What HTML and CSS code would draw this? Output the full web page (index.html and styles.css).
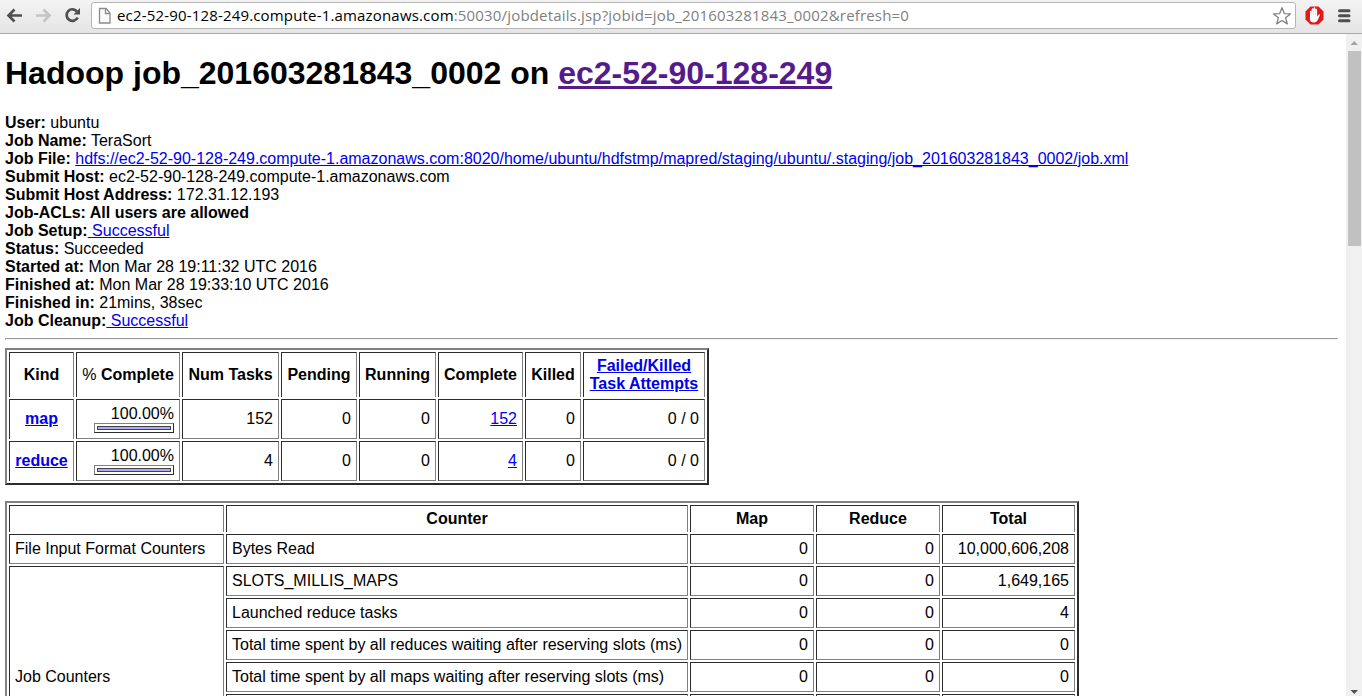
FILE: index.html
```html
<!DOCTYPE html>
<html lang="en">
<head>
<meta charset="utf-8">
<title>Hadoop job_201603281843_0002 on ec2-52-90-128-249</title>
<link rel="stylesheet" href="styles.css">
</head>
<body>
<header class="toolbar">
  <svg class="nav" width="86" height="33" viewBox="0 0 86 33">
    <g fill="none" stroke-width="2.700">
      <path d="M22 15.500H9M14.500 9.500l-6 6 6 6" stroke="#505050"/>
      <path d="M36 15.500h13M43.500 9.500l6 6-6 6" stroke="#c4c4c4"/>
      <path d="M77 11.500A5.800 5.800 0 1 0 77.700 17.500" stroke="#505050"/>
    </g>
    <path d="M80 8v6.500h-6.500z" fill="#505050"/>
  </svg>
  <div class="address">
    <svg width="14" height="18" viewBox="0 0 14 18"><path d="M1.500 1.500h6.500l4 4.500v10h-10.500zM7.500 1.500v5h4.500" fill="#fafafa" stroke="#8b8b8b" stroke-width="1.300"/></svg>
    <span class="url"><span class="host">ec2-52-90-128-249.compute-1.amazonaws.com</span><span class="path">:50030/jobdetails.jsp?jobid=job_201603281843_0002&amp;refresh=0</span></span>
    <svg class="star" width="20" height="20" viewBox="0 0 20 20"><path d="M10 1.700l2.300 5.900 6.100.3-4.800 3.900 1.700 6.100L10 14.500l-5.300 3.400 1.700-6.100L1.600 7.900l6.100-.3z" fill="none" stroke="#808080" stroke-width="1.300" stroke-linejoin="round"/></svg>
  </div>
  <svg class="tools" width="66" height="33" viewBox="0 0 66 33">
    <path d="M14.500 6.500h8l5 5v8l-5 5h-8l-5-5v-8z" fill="#e0191c"/>
    <path d="M14 14.500v-3.200q.9-1.400 1.700 0V9q.9-1.400 1.800 0V7.900q1-1.400 1.900 0v1.500q.9-1.300 1.700 0v7l1.600-2q1.400-.5 1.400.6l-2.800 5.700q-1.300 2-3.500 1.700-3.600 0-3.900-3z" fill="#fff"/>
    <path d="M15.700 11v4M17.500 9v6M19.400 9v6" stroke="#edb7b7" stroke-width=".4"/>
    <path d="M43.500 10.700h9.500M43.500 15.700h9.500M43.500 20.700h9.500" stroke="#4f4f4f" stroke-width="3" stroke-linecap="round"/>
  </svg>
</header>
<div class="view">
  <main class="page">
    <h1><span class="h1-text">Hadoop job_201603281843_0002 on </span><a class="visited" href="#">ec2-52-90-128-249</a></h1>
    <div class="info">
      <div><b>User:</b> ubuntu</div>
      <div><b>Job Name:</b> TeraSort</div>
      <div><b>Job File:</b> <a class="file" href="#">hdfs://ec2-52-90-128-249.compute-1.amazonaws.com:8020/home/ubuntu/hdfstmp/mapred/staging/ubuntu/.staging/job_201603281843_0002/job.xml</a></div>
      <div><b>Submit Host:</b> ec2-52-90-128-249.compute-1.amazonaws.com</div>
      <div><b>Submit Host Address:</b> 172.31.12.193</div>
      <div><b>Job-ACLs: All users are allowed</b></div>
      <div><b>Job Setup:</b><a href="#"> Successful</a></div>
      <div><b>Status:</b> Succeeded</div>
      <div><b>Started at:</b> Mon Mar 28 19:11:32 UTC 2016</div>
      <div><b>Finished at:</b> Mon Mar 28 19:33:10 UTC 2016</div>
      <div><b>Finished in:</b> 21mins, 38sec</div>
      <div><b>Job Cleanup:</b><a href="#"> Successful</a></div>
    </div>
    <hr>
    <table class="tasks">
      <colgroup><col class="w65"><col class="w104"><col class="w97"><col class="w76"><col class="w77"><col class="w85"><col class="w56"><col class="w122"></colgroup>
      <tr class="head"><th>Kind</th><th><span class="light">%</span> Complete</th><th>Num Tasks</th><th>Pending</th><th>Running</th><th>Complete</th><th>Killed</th><th><a href="#">Failed/Killed<br>Task Attempts</a></th></tr>
      <tr><th class="kind"><a href="#">map</a></th><td class="pct">100.00%<div class="bar"><div class="fill"></div></div></td><td>152</td><td>0</td><td>0</td><td><a href="#">152</a></td><td>0</td><td>0 / 0</td></tr>
      <tr><th class="kind"><a href="#">reduce</a></th><td class="pct">100.00%<div class="bar"><div class="fill"></div></div></td><td>4</td><td>0</td><td>0</td><td><a href="#">4</a></td><td>0</td><td>0 / 0</td></tr>
    </table>
    <table class="counters">
      <colgroup><col class="w215"><col class="w462"><col class="w124"><col class="w124"><col class="w133"></colgroup>
      <tr class="head"><th></th><th>Counter</th><th>Map</th><th>Reduce</th><th>Total</th></tr>
      <tr><td class="l">File Input Format Counters</td><td class="l">Bytes Read</td><td>0</td><td>0</td><td>10,000,606,208</td></tr>
      <tr><td class="l" rowspan="7">Job Counters</td><td class="l">SLOTS_MILLIS_MAPS</td><td>0</td><td>0</td><td>1,649,165</td></tr>
      <tr><td class="l">Launched reduce tasks</td><td>0</td><td>0</td><td>4</td></tr>
      <tr><td class="l">Total time spent by all reduces waiting after reserving slots (ms)</td><td>0</td><td>0</td><td>0</td></tr>
      <tr><td class="l">Total time spent by all maps waiting after reserving slots (ms)</td><td>0</td><td>0</td><td>0</td></tr>
      <tr><td></td><td></td><td></td><td></td></tr>
      <tr><td></td><td></td><td></td><td></td></tr>
      <tr><td></td><td></td><td></td><td></td></tr>
    </table>
  </main>
  <div class="scrollbar">
    <svg width="16" height="17" viewBox="0 0 16 17"><path d="M4.500 11h7.500L8.250 7z" fill="#a3a3a3"/></svg>
    <div class="thumb"></div>
    <svg class="down" width="16" height="10" viewBox="0 0 16 10"><path d="M4.500 4h7.500L8.250 8z" fill="#505050"/></svg>
  </div>
</div>
</body>
</html>
```
FILE: styles.css
```css
* { box-sizing: border-box; }
body { margin: 0; height: 696px; overflow: hidden; display: flex; flex-direction: column; background: #fff; color: #000; font: 16px/18px "Liberation Sans", Arial, sans-serif; }
.toolbar { flex: none; height: 34px; display: flex; border-bottom: 1px solid #a9a9a9; background: linear-gradient(#f3f3f3, #e5e5e5); }
.nav { flex: none; margin-right: 5px; }
.address { flex: none; width: 1205px; height: 27px; margin-top: 2px; display: flex; align-items: center; padding: 0 3px 0 6px; border: 1px solid #b5b5b5; border-radius: 3px; background: #fff; }
.url { flex: 1; margin: 0 0 2px 5px; white-space: nowrap; font: 15px/22px "Open Sans", "Noto Sans", sans-serif; letter-spacing: 0.17px; }
.path { color: #808080; }
.tools { flex: none; }
.view { flex: 1; min-height: 0; display: flex; }
.page { flex: 1; min-width: 0; overflow: hidden; padding: 21px 8px 0 5px; }
h1 { margin: 0; font-size: 32px; line-height: 36px; white-space: nowrap; }
a { color: #0000ee; }
a.visited { color: #551a8b; }
.info { margin-top: 23px; white-space: nowrap; }
hr { height: 2px; margin: 8px 0; border: 1px solid #9a9a9a; border-bottom-color: #eee; border-right-color: #eee; }
table { table-layout: fixed; border: 2px solid; border-color: #808080 #2c2c2c #2c2c2c #808080; border-spacing: 2px; white-space: nowrap; }
.tasks { width: 704px; }
.counters { width: 1074px; margin-top: 16px; }
th, td { padding: 0 5px; border: 1px solid; border-color: #2c2c2c #808080 #808080 #2c2c2c; vertical-align: middle; }
th { border-bottom: 0; text-align: center; }
td { text-align: right; }
.kind { padding-bottom: 1px; }
.l { text-align: left; }
.light { font-weight: normal; }
.tasks tr { height: 40px; }
.tasks .head { height: 45px; }
.counters tr { height: 30px; }
.counters .head { height: 27px; }
.bar { width: 80px; height: 10px; margin-left: auto; padding: 2px; border: 1px solid; border-color: #808080 #2c2c2c #2c2c2c #808080; }
.fill { height: 4px; border: 1px solid #444; background: #aaaaff; }
.w65 { width: 65px; } .w104 { width: 104px; } .w97 { width: 97px; } .w76 { width: 76px; }
.w77 { width: 77px; } .w85 { width: 85px; } .w56 { width: 56px; } .w122 { width: 122px; }
.w215 { width: 215px; } .w462 { width: 462px; } .w124 { width: 124px; } .w133 { width: 133px; }
.scrollbar { flex: none; width: 16px; display: flex; flex-direction: column; background: #f0f0f0; }
.thumb { width: 13px; height: 195px; margin-left: 2px; background: #c1c1c1; }
.down { margin-top: auto; }
```
